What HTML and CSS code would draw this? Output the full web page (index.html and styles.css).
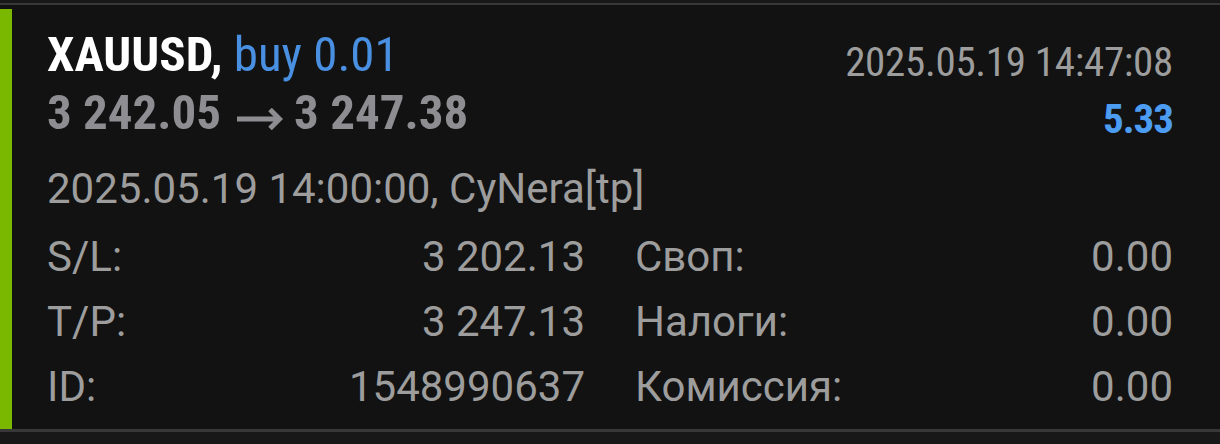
FILE: index.html
```html
<!DOCTYPE html>
<html lang="ru">
<head>
    <meta charset="UTF-8">
    <meta name="viewport" content="width=device-width, initial-scale=1.0">
    <title>Сделка XAUUSD</title>
    <link rel="stylesheet" href="styles.css">
</head>
<body>

    <div class="deal">
        <div class="deal-mark"></div>
        <div class="deal-body">
            <div class="deal-head">
                <div class="deal-title">
                    <div class="line-big"><span class="symbol">XAUUSD,</span> <span class="side">buy 0.01</span></div>
                    <div class="line-big price">3 242.05<svg class="arrow" width="46" height="22" viewBox="0 0 46 22"><path d="M0 11H43M33 1.5L42.5 11L33 20.5" fill="none" stroke="currentColor" stroke-width="5"/></svg>3 247.38</div>
                </div>
                <div class="deal-result">
                    <div class="time">2025.05.19 14:47:08</div>
                    <div class="profit">5.33</div>
                </div>
            </div>

            <div class="deal-open">2025.05.19 14:00:00, CyNera[tp]</div>

            <div class="deal-grid">
                <div class="field"><span>S/L:</span><span>3 202.13</span></div>
                <div class="field"><span>Своп:</span><span>0.00</span></div>
                <div class="field"><span>T/P:</span><span>3 247.13</span></div>
                <div class="field"><span>Налоги:</span><span>0.00</span></div>
                <div class="field"><span>ID:</span><span>1548990637</span></div>
                <div class="field"><span>Комиссия:</span><span>0.00</span></div>
            </div>
        </div>
    </div>

</body>
</html>
```

FILE: styles.css
```css
body { margin: 0; padding-top: 3px; background: #181818; font-family: Roboto, "Liberation Sans", sans-serif; color: #9d9d9d; }
.deal { display: flex; height: 429px; box-sizing: border-box; padding-top: 4px; background: #121212; border-top: 2px solid #383838; border-bottom: 3px solid #383838; }
.deal-mark { width: 12px; background: #7ab800; }
.deal-body { flex: 1; padding: 17px 47px 0 35px; }

.deal-head { display: flex; justify-content: space-between; height: 117px; font-stretch: 87.5%; }
.line-big { font-size: 49px; font-weight: bold; line-height: 58px; white-space: nowrap; }
.symbol { color: #ffffff; }
.side { color: #4a90e2; font-weight: normal; }
.price { color: #8e8e92; }
.arrow { margin: 0 11px 0 16px; vertical-align: -1px; }
.deal-result { text-align: right; }
.time { font-size: 41px; letter-spacing: -0.3px; line-height: 58px; height: 64px; padding-top: 7px; box-sizing: border-box; }
.profit { font-size: 41px; letter-spacing: -1px; font-weight: bold; line-height: 58px; color: #4c9cf2; }

.deal-open { font-size: 42px; line-height: 50px; margin-top: 21px; }
.deal-grid { display: grid; grid-template-columns: 1fr 1fr; column-gap: 50px; margin-top: 10px; font-size: 42px; line-height: 65px; }
.field { display: flex; justify-content: space-between; }
```
